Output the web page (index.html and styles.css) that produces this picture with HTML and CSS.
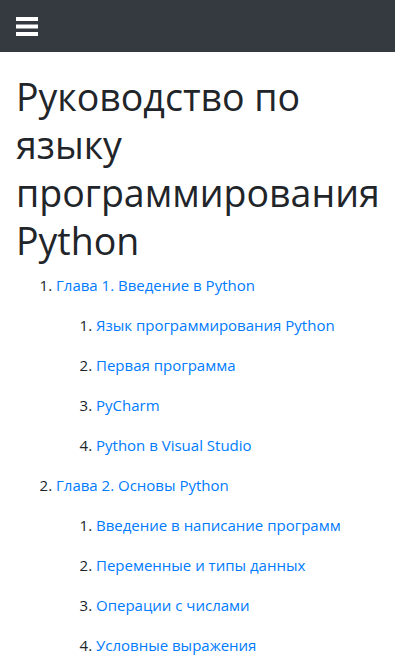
FILE: index.html
```html
<!DOCTYPE html>
<html lang="ru">
<head>
<meta charset="utf-8">
<title>Руководство по языку программирования Python</title>
<link rel="stylesheet" href="styles.css">
</head>
<body>
<nav class="navbar">
  <button class="toggler" aria-label="Меню">
    <svg width="22" height="19" viewBox="0 0 22 19"><rect x="0" y="0" width="22" height="4" fill="#fff"/><rect x="0" y="7.5" width="22" height="4" fill="#fff"/><rect x="0" y="15" width="22" height="4" fill="#fff"/></svg>
  </button>
</nav>
<main class="content">
  <h1 class="title">Руководство по языку программирования Python</h1>
  <ol class="toc">
    <li><a href="#" class="line">Глава 1. Введение в Python</a>
      <ol class="toc sub">
        <li><a href="#" class="line">Язык программирования Python</a></li>
        <li><a href="#" class="line">Первая программа</a></li>
        <li><a href="#" class="line">PyCharm</a></li>
        <li><a href="#" class="line">Python в Visual Studio</a></li>
      </ol>
    </li>
    <li><a href="#" class="line">Глава 2. Основы Python</a>
      <ol class="toc sub">
        <li><a href="#" class="line">Введение в написание программ</a></li>
        <li><a href="#" class="line">Переменные и типы данных</a></li>
        <li><a href="#" class="line">Операции с числами</a></li>
        <li><a href="#" class="line">Условные выражения</a></li>
      </ol>
    </li>
  </ol>
</main>
</body>
</html>
```
FILE: styles.css
```css
html, body {
  margin: 0;
  padding: 0;
}
body {
  font-family: "Open Sans", "Noto Sans", sans-serif;
  font-size: 15px;
  color: #212529;
  background: #fff;
}
.navbar {
  height: 52px;
  background: #343a40;
  display: flex;
  align-items: center;
  padding: 0 16px;
}
.toggler {
  background: none;
  border: 0;
  padding: 0;
  margin: 0;
  display: flex;
  margin-top: 1px;
}
.content {
  padding: 21px 16px 0 16px;
}
.title {
  font-size: 37.5px;
  font-weight: 400;
  line-height: 48px;
  margin: 0 0 8px 0;
}
.toc {
  margin: 0;
  padding-left: 40px;
}
.toc li {
  line-height: 24px;
}
.line {
  display: block;
  padding-bottom: 16px;
  color: #007bff;
  text-decoration: none;
}
```
